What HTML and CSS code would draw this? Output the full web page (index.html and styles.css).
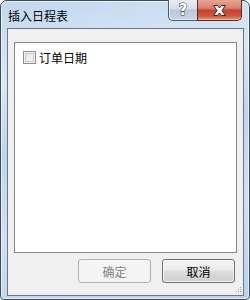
FILE: index.html
```html
<!DOCTYPE html>
<html>
<head>
<meta charset="utf-8">
<link rel="stylesheet" href="styles.css">
</head>
<body>
<div class="window">
  <div class="titlebar">
    <div class="title">插入日程表</div>
    <div class="caption-buttons">
      <div class="cap help"><span class="qmark">?</span></div>
      <div class="cap close">
        <svg width="17" height="13" viewBox="0 0 17 13">
          <path d="M2.5 1.5 L6.5 1.5 L8.5 4 L10.5 1.5 L14.5 1.5 L11 6.5 L14.5 11.5 L10.5 11.5 L8.5 9 L6.5 11.5 L2.5 11.5 L6 6.5 Z" fill="#ffffff" stroke="#3c2520" stroke-width="1" stroke-linejoin="round"/>
        </svg>
      </div>
    </div>
  </div>
  <div class="client">
    <div class="listbox">
      <label class="item"><span class="checkbox"></span><span class="label">订单日期</span></label>
    </div>
    <div class="buttons">
      <div class="btn disabled">确定</div>
      <div class="btn">取消</div>
    </div>
    <div class="grip">
      <svg width="7" height="7" viewBox="0 0 7 7">
        <rect x="5" y="0" width="1" height="1" fill="#a0a0a0"/>
        <rect x="3" y="2" width="1" height="1" fill="#a0a0a0"/>
        <rect x="5" y="2" width="1" height="1" fill="#a0a0a0"/>
        <rect x="1" y="4" width="1" height="1" fill="#a0a0a0"/>
        <rect x="3" y="4" width="1" height="1" fill="#a0a0a0"/>
        <rect x="5" y="4" width="1" height="1" fill="#a0a0a0"/>
      </svg>
    </div>
  </div>
</div>
</body>
</html>
```
FILE: styles.css
```css
html, body {
  margin: 0;
  padding: 0;
  background: #ffffff;
}
body {
  font-family: "Noto Sans CJK SC", "Liberation Sans", sans-serif;
  font-size: 12px;
}
.window {
  width: 250px;
  height: 300px;
  box-sizing: border-box;
  border: 1px solid #3d4b5d;
  border-radius: 7px 7px 4px 4px;
  background: linear-gradient(170deg, #c2d8ef 0%, #d9e7f6 25%, #bfd5ed 45%, #cfe0f2 70%, #b9d1eb 100%);
  box-shadow: inset 0 0 0 1px rgba(255,255,255,0.6);
  display: flex;
  flex-direction: column;
  padding: 0 5px 3px 6px;
}
.titlebar {
  height: 27px;
  display: flex;
  align-items: flex-start;
  justify-content: space-between;
}
.title {
  margin-top: 7px;
  margin-left: 1px;
  line-height: 16px;
  color: #000000;
  font-size: 12px;
}
.caption-buttons {
  display: flex;
  margin-top: -1px;
  margin-right: 2px;
}
.cap {
  height: 21px;
  box-sizing: border-box;
  border: 1px solid #4d5b6e;
  border-top: none;
  display: flex;
  align-items: center;
  justify-content: center;
}
.help {
  width: 29px;
  border-radius: 0 0 0 5px;
  border-right: none;
  background: linear-gradient(180deg, #e6edf5 0%, #d3dde9 45%, #b8c6d6 50%, #c9d6e4 100%);
  box-shadow: inset 1px 0 0 rgba(255,255,255,0.6), inset 0 -1px 0 rgba(255,255,255,0.5);
}
.qmark {
  font-family: "DejaVu Sans", sans-serif;
  font-weight: bold;
  font-size: 15px;
  line-height: 16px;
  color: #ffffff;
  -webkit-text-stroke: 1px #3a4350;
  paint-order: stroke fill;
}
.close {
  width: 45px;
  border-radius: 0 0 5px 0;
  border-color: #5a2b25;
  background: linear-gradient(180deg, #e7a595 0%, #d9826e 40%, #c6432b 52%, #d0573d 80%, #e49b7d 100%);
  box-shadow: inset 0 -1px 0 rgba(255,210,190,0.5);
}
.close svg {
  display: block;
}
.client {
  flex: 1;
  border: 1px solid #6b7888;
  background: #f0f0f0;
  display: flex;
  flex-direction: column;
  padding: 13px 6px 12px 6px;
  position: relative;
}
.listbox {
  flex: 1;
  border: 1px solid #828790;
  background: #ffffff;
  padding: 8px 0 0 8px;
}
.item {
  display: flex;
  align-items: center;
  gap: 3px;
  height: 13px;
}
.checkbox {
  width: 13px;
  height: 13px;
  box-sizing: border-box;
  border: 1px solid #8e8f8f;
  background: linear-gradient(135deg, #dcdcdc 0%, #f2f2f2 60%, #fafafa 100%);
  box-shadow: inset 0 0 0 1px #f4f4f4, inset 0 0 0 2px #c8c8c8;
}
.label {
  line-height: 13px;
  color: #000000;
}
.buttons {
  display: flex;
  justify-content: flex-end;
  gap: 11px;
  margin-top: 6px;
  padding-right: 2px;
}
.btn {
  width: 73px;
  height: 24px;
  box-sizing: border-box;
  border: 1px solid #707070;
  border-radius: 3px;
  background: linear-gradient(180deg, #f3f3f3 0%, #ebebeb 45%, #dddddd 50%, #cfcfcf 100%);
  box-shadow: inset 0 0 0 1px rgba(255,255,255,0.7);
  display: flex;
  align-items: center;
  justify-content: center;
  color: #000000;
}
.btn.disabled {
  border-color: #adb2b5;
  background: #f4f4f4;
  box-shadow: none;
  color: #838383;
}
.grip {
  position: absolute;
  right: 1px;
  bottom: 1px;
  width: 7px;
  height: 7px;
}
.grip svg {
  display: block;
}
```
